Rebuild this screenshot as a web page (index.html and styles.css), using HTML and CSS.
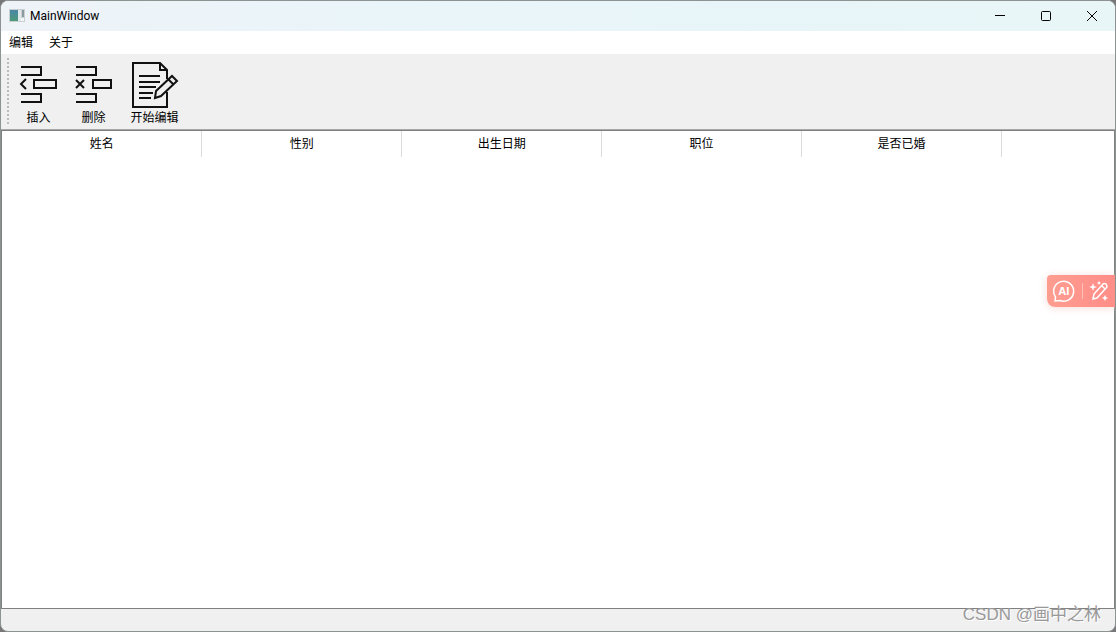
FILE: index.html
```html
<!DOCTYPE html>
<html lang="zh-CN">
<head>
<meta charset="utf-8">
<title>MainWindow</title>
<link rel="stylesheet" href="styles.css">
</head>
<body>
<div class="window">
  <header class="titlebar">
    <svg class="app-icon" width="16" height="13" viewBox="0 0 16 13"><defs><linearGradient id="g" x2="0" y2="1"><stop offset="0" stop-color="#4a88a8"/><stop offset="1" stop-color="#4d9a78"/></linearGradient></defs><path d="M0 0h16v13H0z" fill="#c9d0d2"/><path d="M1 1h8v11H1z" fill="url(#g)"/><path d="M9 1h3v11H9z" fill="#e4eaeb"/><path d="M13 1h2v7h-2z" fill="#8b9b9f"/><path d="M12 9h3v3h-3z" fill="#f4f6f6"/></svg>
    <h1 class="title">MainWindow</h1>
    <div class="controls">
      <button class="control" aria-label="最小化"><svg width="12" height="12" viewBox="0 0 12 12"><path d="M1 5.5h10"/></svg></button>
      <button class="control" aria-label="最大化"><svg width="12" height="12" viewBox="0 0 12 12"><rect x="1.5" y="1.5" width="9" height="9" rx="1"/></svg></button>
      <button class="control" aria-label="关闭"><svg width="12" height="12" viewBox="0 0 12 12"><path d="M1 1l10 10M11 1L1 11"/></svg></button>
    </div>
  </header>
  <nav class="menubar">
    <button class="menu">编辑</button>
    <button class="menu">关于</button>
  </nav>
  <div class="toolbar">
    <div class="grip"></div>
    <button class="tool">
      <svg width="48" height="48" viewBox="0 0 48 48"><path d="M6 6h20v8H6M6 33h20v8H6M19 19h22v8H19zM11 18l-5 5 5 5"/></svg>
      <span>插入</span>
    </button>
    <button class="tool">
      <svg width="48" height="48" viewBox="0 0 48 48"><path d="M6 6h20v8H6M6 33h20v8H6M23 19h18v8H23zM6 19l8 8M14 19l-8 8"/></svg>
      <span>删除</span>
    </button>
    <button class="tool">
      <svg width="48" height="48" viewBox="0 0 48 48"><path d="M36 18V9l-7-7H2v44h34V31M29 2v7h7M8 15h21M8 21h21M8 26h17M8 32h14M8 37h12M24 37l1-7 16-15 5 5-16 15zM37 18l5 5"/></svg>
      <span>开始编辑</span>
    </button>
  </div>
  <main class="view">
    <table class="grid">
      <thead><tr><th>姓名</th><th>性别</th><th>出生日期</th><th>职位</th><th>是否已婚</th></tr></thead>
    </table>
  </main>
  <footer class="status"></footer>
  <div class="assistant">
    <button class="assist" aria-label="AI"><svg width="24" height="24" viewBox="0 0 24 24"><path d="M3 22l.5-4A10 10 0 1 1 8 21.500z"/><text x="12" y="16">AI</text></svg></button>
    <span class="divider"></span>
    <button class="assist" aria-label="魔法笔"><svg width="20" height="20" viewBox="0 0 20 20"><path d="M4 18l1-5L14 3q2-1 3 0t1 3L8 17zM13 5l3 3"/><path class="spark" d="M4 2l1 3 3 1-3 1-1 3-1-3-3-1 3-1zM10 0l.7 1.300 1.300.7-1.300.7L10 4l-.7-1.300L8 2l1.300-.7zM16 14l1 2 2 1-2 1-1 2-1-2-2-1 2-1z"/></svg></button>
  </div>
  <div class="watermark">CSDN @画中之林</div>
</div>
</body>
</html>
```
FILE: styles.css
```css
* { box-sizing: border-box; }
body { margin: 0; background: #777; color: #000; font: 12px/16px "Noto Sans", "Noto Sans CJK SC", sans-serif; }
button { padding: 0; border: 0; background: none; color: inherit; font: inherit; }
svg { display: block; fill: none; }
.window { position: relative; display: flex; flex-direction: column; height: 100vh; border: 1px solid #8d9293; border-radius: 8px; overflow: hidden; background: #f0f0f0; }
.titlebar { display: flex; flex: none; align-items: center; height: 30px; padding: 0 0 1px 8px; gap: 5px; background: linear-gradient(90deg, #eef3f8, #e9f5f9 40%, #e8f6f8); }
.title { flex: 1; margin: 0; font: 12px/16px Roboto, sans-serif; }
.controls { display: flex; align-self: stretch; }
.control { display: flex; align-items: center; justify-content: center; width: 46px; stroke: #000; }
.menubar { display: flex; flex: none; height: 23px; background: #fff; }
.menu { width: 40px; }
.toolbar { display: flex; flex: none; align-items: flex-start; height: 76px; padding: 4px 6px; border-bottom: 1px solid #a8a8a8; }
.grip { width: 3px; height: 68px; margin-right: 1px; background: radial-gradient(circle at 1px 1px, #bbb 1px, transparent 1px) 0 0 / 3px 4px; }
.tool { display: flex; flex-direction: column; align-items: center; gap: 1px; width: 55px; padding-top: 3px; }
.tool:last-child { width: 67px; }
.tool svg { stroke: #111; stroke-width: 2; }
.view { flex: 1; border: 1px solid #808080; background: #fff; }
.grid { table-layout: fixed; width: 1000px; border-collapse: collapse; }
.grid th { height: 26px; padding: 0; border-right: 1px solid #dcdcdc; font-weight: 400; }
.status { flex: none; height: 22px; }
.assistant { position: absolute; top: 274px; right: 0; display: flex; align-items: center; gap: 6px; height: 32px; padding: 0 6px 0 5px; border-radius: 4px 0 0 8px; background: linear-gradient(90deg, #ff9d90, #ff8d88); box-shadow: 0 1px 8px #f7dcd8; }
.assist svg { stroke: #fff; stroke-width: 1.500; }
.assist text { fill: #fff; stroke: none; font: 700 11px "Open Sans", sans-serif; text-anchor: middle; }
.assist .spark { fill: #fff; stroke: none; }
.divider { width: 1px; height: 16px; background: #ffc0ba; }
.watermark { position: absolute; right: 14px; bottom: 4px; color: #999; font: 17px/24px "Liberation Sans", "Noto Sans CJK SC", sans-serif; text-shadow: 1px 1px #fff; }
```
